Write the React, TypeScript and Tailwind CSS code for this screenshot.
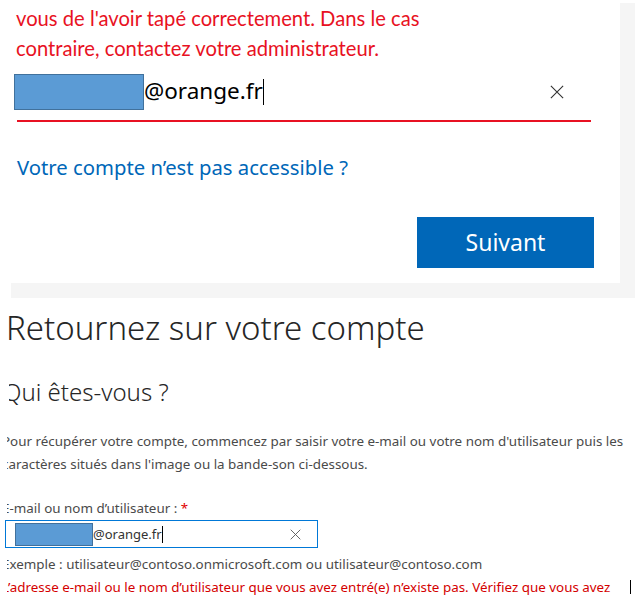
import React from "react";

const XIcon = ({ size, color }: { size: number; color: string }) => (
  <svg width={size} height={size} viewBox="0 0 16 16" fill="none">
    <path d="M1 1L15 15M15 1L1 15" stroke={color} strokeWidth="1.3" />
  </svg>
);

export default function App() {
  return (
    <div
      className="w-[636px] h-[612px] bg-white overflow-hidden"
      style={{ fontFamily: '"Noto Sans", "Open Sans", sans-serif' }}
    >
      {/* Top screenshot */}
      <div className="flex h-[298px]">
        <div className="w-[620px] flex flex-col">
          <div className="h-[283px] bg-white relative flex flex-col">
            <div
              className="pl-[16px] pt-[3px] text-[20.2px] leading-[30px] text-[#e81123]"
              style={{ fontFamily: 'Lato, "Noto Sans", sans-serif' }}
            >
              <div>vous de l'avoir tapé correctement. Dans le cas</div>
              <div>contraire, contactez votre administrateur.</div>
            </div>
            <div className="flex items-center h-[37px] mt-[10px] pl-[14px] pr-[56px]">
              <div className="w-[130px] h-[36px] bg-[#5b9bd5] border border-[#41719c]" />
              <span className="text-[22.5px] text-black leading-none">@orange.fr</span>
              <span className="w-[1px] h-[26px] bg-black" />
              <span className="flex-1" />
              <XIcon size={14} color="#333" />
            </div>
            <div className="ml-[17px] mt-[10px] w-[574px] h-[2px] bg-[#e81123]" />
            <div className="ml-[17px] mt-[32px] text-[20.3px] leading-[26px] text-[#0067b8]">
              Votre compte n’est pas accessible ?
            </div>
            <div className="flex justify-end pr-[26px] mt-[37px]">
              <div className="w-[177px] h-[51px] bg-[#0067b8] flex items-center justify-center text-white text-[23px]">
                Suivant
              </div>
            </div>
          </div>
          <div className="ml-[11px] h-[15px] bg-[#f5f5f5]" />
        </div>
        <div className="w-[15px] mt-[3px] bg-[#f5f5f5]" />
      </div>

      {/* Bottom screenshot */}
      <div className="pl-[7px] overflow-hidden">
        <div className="overflow-hidden">
          <div className="-ml-[1px] mt-[8px] text-[33px] leading-[44px] font-light text-[#262626] whitespace-nowrap">
            Retournez sur votre compte
          </div>
        </div>
      </div>
      <div className="pl-[9px] overflow-hidden">
        <div className="overflow-hidden">
          <div className="-ml-[6px] mt-[27px] text-[24px] leading-[30px] font-light text-[#262626] whitespace-nowrap">
            Qui êtes-vous ?
          </div>
        </div>
      </div>
      <div className="pl-[7px] overflow-hidden">
        <div className="overflow-hidden">
          <div className="-ml-[5px] mt-[23px] text-[13.4px] leading-[23px] text-[#4a4a4a] whitespace-nowrap">
            <div>Pour récupérer votre compte, commencez par saisir votre e-mail ou votre nom d'utilisateur puis les</div>
            <div>caractères situés dans l'image ou la bande-son ci-dessous.</div>
          </div>
          <div className="-ml-[5px] mt-[23px] text-[13.4px] leading-[18px] text-[#4a4a4a] whitespace-nowrap">
            E-mail ou nom d’utilisateur : <span className="text-[#e00000]">*</span>
          </div>
        </div>
      </div>
      <div className="flex">
        <div className="ml-[5px] mt-[3px] w-[313px] h-[28px] border border-[#0078d7] flex items-center pl-[9px] pr-[16px]">
          <div className="w-[78px] h-[23px] bg-[#5b9bd5] border border-[#41719c]" />
          <span className="text-[13px] text-[#333] leading-none">@orange.fr</span>
          <span className="w-[1px] h-[17px] bg-black" />
          <span className="flex-1" />
          <XIcon size={11} color="#555" />
        </div>
      </div>
      <div className="pl-[7px] overflow-hidden">
        <div className="overflow-hidden">
          <div className="-ml-[5px] mt-[5px] text-[13.4px] leading-[22px] text-[#4a4a4a] whitespace-nowrap">
            Exemple : utilisateur@contoso.onmicrosoft.com ou utilisateur@contoso.com
          </div>
          <div className="-ml-[5px] mt-[1px] text-[13.4px] leading-[22px] text-[#d40000] whitespace-nowrap flex items-center">
            <span>L’adresse e-mail ou le nom d’utilisateur que vous avez entré(e) n’existe pas. Vérifiez que vous avez</span>
            <span className="ml-[20px] w-[1px] h-[14px] bg-black" />
          </div>
        </div>
      </div>
    </div>
  );
}
